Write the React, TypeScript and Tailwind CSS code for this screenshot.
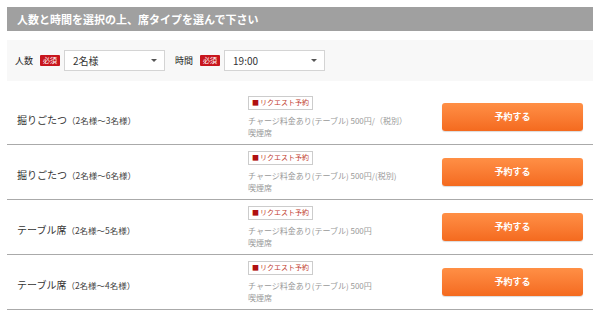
interface SeatType {
    id: number;
    name: string;
    capacity: string;
    charge: string;
    smoking: string;
}

const seats: SeatType[] = [
    { id: 1, name: "掘りごたつ", capacity: "（2名様〜3名様）", charge: "チャージ料金あり(テーブル) 500円/（税別）", smoking: "喫煙席" },
    { id: 2, name: "掘りごたつ", capacity: "（2名様〜6名様）", charge: "チャージ料金あり(テーブル) 500円/(税別)", smoking: "喫煙席" },
    { id: 3, name: "テーブル席", capacity: "（2名様〜5名様）", charge: "チャージ料金あり(テーブル) 500円", smoking: "喫煙席" },
    { id: 4, name: "テーブル席", capacity: "（2名様〜4名様）", charge: "チャージ料金あり(テーブル) 500円", smoking: "喫煙席" },
];

const Required = () => (
    <span className="ml-[7px] mr-[4px] inline-flex h-[11px] w-[20px] items-center justify-center rounded-[1px] bg-[#c8161d] text-[7px] leading-none text-white">
        必須
    </span>
);

const FakeSelect = ({ value }: { value: string }) => (
    <div className="flex h-[21px] w-[101px] items-center justify-between border border-[#d4d4d4] bg-white pl-[8px] pr-[7px] text-[10px] text-[#333]">
        <span>{value}</span>
        <span className="h-0 w-0 border-x-[3px] border-t-[3px] border-x-transparent border-t-[#555]"></span>
    </div>
);

export default function App() {
    return (
        <div className="min-h-[316px] w-[600px] bg-white px-[7px] pt-[7px] font-['Noto_Sans_CJK_JP',sans-serif]">
            <div className="flex h-[24px] items-center bg-[#a0a0a0] px-[10px] text-[11px] font-bold text-white">
                人数と時間を選択の上、席タイプを選んで下さい
            </div>

            <div className="mt-[9px] flex h-[41px] items-center bg-[#f8f8f8] pl-[8px] text-[9px] text-[#222]">
                <span>人数</span>
                <Required />
                <FakeSelect value="2名様" />
                <span className="ml-[10px]">時間</span>
                <Required />
                <FakeSelect value="19:00" />
            </div>

            <div className="mt-[9px]">
                {seats.map((s) => (
                    <div key={s.id} className="flex h-[55px] items-center border-b border-[#aaaaaa]">
                        <div className="w-[241px] pl-[10px] text-[#333]">
                            <span className="text-[10px]">{s.name}</span>
                            <span className="text-[8.5px] text-[#444]">{s.capacity}</span>
                        </div>
                        <div className="flex w-[194px] flex-col">
                            <div className="flex">
                                <span className="flex h-[14px] items-center border border-[#cccccc] px-[3px] text-[7px] leading-none text-[#c0392b]">
                                    <span className="mr-[1px] text-[#b01010]">■</span>リクエスト予約
                                </span>
                            </div>
                            <p className="mt-[5px] text-[8px] leading-[12px] text-[#999]">{s.charge}</p>
                            <p className="text-[8px] leading-[12px] text-[#999]">{s.smoking}</p>
                        </div>
                        <button className="flex h-[28px] w-[141px] items-center justify-center rounded-[3px] bg-gradient-to-b from-[#ff8f45] to-[#f46a1e] text-[9px] font-bold text-white shadow-[0_1px_1px_rgba(0,0,0,0.15)]">
                            予約する
                        </button>
                    </div>
                ))}
            </div>
        </div>
    );
}
